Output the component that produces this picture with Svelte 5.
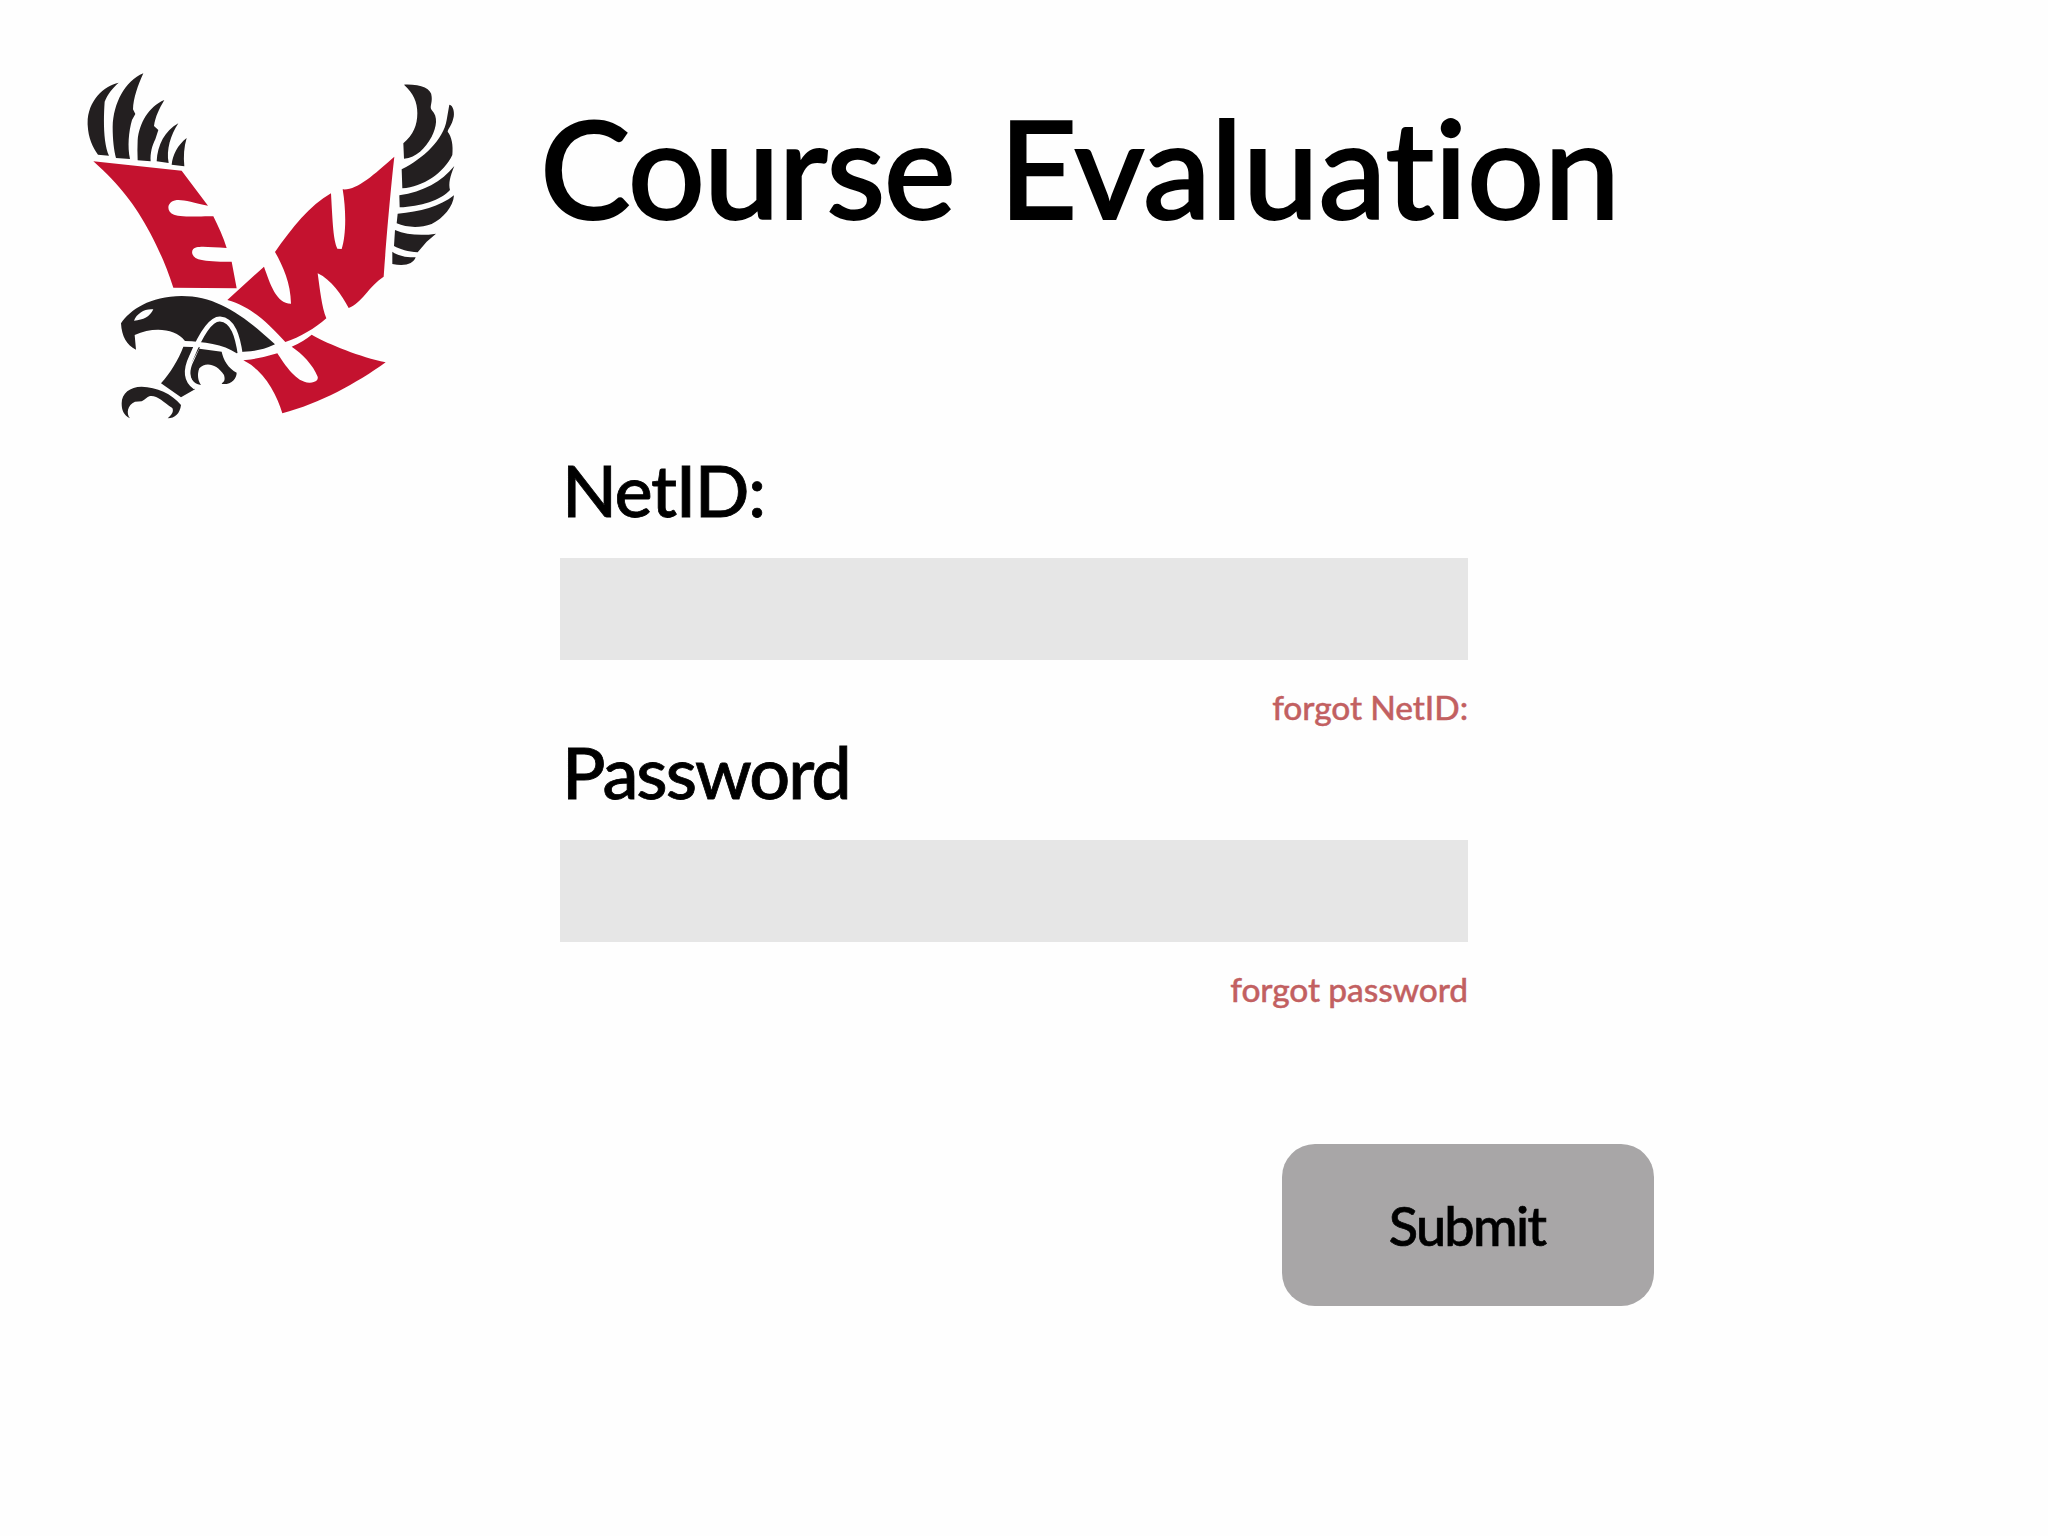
<script>
  let netId = $state('');
  let password = $state('');
</script>

<div class="page">
  <header>
    <svg class="logo" viewBox="80 66 384 360" role="img" aria-label="EWU eagle">
      <!-- left wing feathers and the E -->
      <g transform="translate(70 60) scale(.33333)">
        <g fill="#231f20">
          <path d="M146 68C100 78 50 125 53 195C55 235 68 262 84 284L117 287C100 250 100 180 104 125C112 104 128 84 146 68Z" />
          <path d="M220 40C165 62 130 130 128 200C128 240 132 270 138 294L180 297C172 260 176 215 186 180L196 162L189 148C190 115 204 75 220 40Z" />
          <path d="M283 120C235 140 208 190 203 240C202 260 202 280 203 301L242 304C240 280 247 255 256 238L265 210L252 198C256 170 268 145 283 120Z" />
          <path d="M325 190C285 212 262 255 260 304L296 309C288 270 302 225 325 190Z" />
          <path d="M350 234C322 256 308 285 305 314L343 319C340 290 342 260 350 234Z" />
        </g>
        <path fill="#c4122f" d="M70 304L335 332L414 437C370 428 340 418 320 420C290 424 287 455 312 464C330 470 370 470 430 469C445 500 460 530 470 564C430 562 395 558 380 562C360 566 362 590 385 598C405 604 440 606 485 605L500 685L310 683C290 620 265 565 240 518C195 435 150 375 70 304Z" />
      </g>
      <!-- right wing feathers -->
      <g transform="translate(260 60) scale(.33333)" fill="#231f20">
        <path d="M432 74C480 72 515 85 515 110C517 130 508 140 515 150C535 170 530 200 515 230C495 265 470 292 432 296L430 250C460 225 472 195 472 160C472 125 460 100 432 74Z" />
        <path d="M425 328C490 295 550 240 560 180L568 134C580 135 585 160 580 175C576 195 565 205 563 215C575 230 580 255 577 285C550 340 490 380 427 385Z" />
        <path d="M418 406C490 395 545 365 583 318C570 350 565 370 570 390C545 420 480 440 419 442Z" />
        <path d="M413 461C480 455 540 440 582 406C580 440 550 475 515 492C480 505 440 503 410 490Z" />
        <path d="M405 510C440 525 485 528 528 521L500 545L473 577C445 575 420 568 402 558Z" />
        <path d="M397 575C415 588 440 593 467 592C460 612 435 620 397 612Z" />
      </g>
      <!-- W and U -->
      <g transform="translate(220 220) scale(.33333)" fill="#c4122f">
        <path d="M22 240L132 140C150 190 168 250 213 251C212 190 190 140 165 96C215 25 270 -45 333 -80C338 10 340 60 352 86L365 87C377 50 380 -20 368 -92C410 -88 460 -135 523 -190C515 -120 500 40 491 170C445 200 425 250 386 264C365 225 335 180 293 160C300 210 305 260 319 295C285 325 240 352 196 366C150 315 95 260 22 240Z" />
        <path d="M70 421Q125 415 172 400C195 435 230 490 270 488C290 487 295 478 293 470C280 435 245 400 215 380Q250 365 275 344C330 375 420 410 497 427C410 490 300 550 187 580C170 520 130 450 70 421Z" />
      </g>
      <!-- head and talons -->
      <g transform="translate(100 180) scale(.33333)">
        <g fill="#231f20">
          <path d="M63 430C65 470 80 495 108 509L104 465C160 440 225 445 255 483C310 485 370 492 410 520L430 515Q480 515 525 493C430 405 350 348 245 348C150 348 90 390 63 430Z" />
          <path d="M250 500L300 502L268 560C256 590 264 612 285 628L243 652L183 610C210 580 235 540 250 500Z" />
          <path d="M298 506L365 515C370 540 385 565 410 578C410 595 395 615 365 612C368 605 378 605 372 585C350 550 315 545 298 565C290 585 295 605 303 615C270 610 265 580 278 550Z" />
          <path d="M65 670C65 640 90 620 125 620C170 622 215 640 243 675C240 700 225 715 203 715C215 705 222 695 217 684C190 665 170 645 150 648C140 650 135 660 125 664L105 665C82 675 78 700 90 715C70 705 65 690 65 670Z" />
        </g>
        <path fill="#fefefe" d="M102 422C110 400 135 385 160 388C150 410 130 420 102 422Z" />
        <path fill="none" stroke="#fefefe" stroke-width="15" d="M286 622C255 600 258 565 275 530C300 470 330 416 360 417C400 420 413 470 421 524" />
      </g>
    </svg>
    <h1><span class="course">Course</span><span class="evaluation">Evaluation</span></h1>
  </header>

  <form onsubmit={(event) => event.preventDefault()}>
    <label class="label netid" for="netid">NetID:</label>
    <input id="netid" type="text" bind:value={netId} />
    <a href="#netid">forgot NetID:</a>
    <label class="label" for="password">Password</label>
    <input id="password" type="password" bind:value={password} />
    <a href="#password">forgot password</a>
    <button type="submit">Submit</button>
  </form>
</div>

<style>
  :global(body) {
    background: #fefefe;
  }
  .page {
    box-sizing: border-box;
    width: 2048px;
    height: 1536px;
    overflow: hidden;
    padding: 66px 0 0 80px;
    font-family: Lato, "Open Sans", sans-serif;
    font-weight: 500;
    font-variant-ligatures: none;
    color: #000;
  }
  header {
    display: flex;
    height: 374px;
  }
  .logo {
    width: 384px;
    height: 360px;
    filter: blur(0.6px);
  }
  h1 {
    display: flex;
    margin: 0 0 0 76px;
    padding-top: 11px;
    font-size: 136px;
    line-height: 180px;
    font-weight: 500;
    white-space: nowrap;
    -webkit-text-stroke: 1.8px #000;
  }
  .course {
    width: 459px;
    letter-spacing: -1.5px;
  }
  .evaluation {
    letter-spacing: -0.3px;
  }
  form {
    display: flex;
    flex-direction: column;
    width: 908px;
    margin-left: 480px;
  }
  .label {
    height: 118px;
    padding-left: 2px;
    font-size: 72px;
    line-height: 98px;
    letter-spacing: -2px;
    -webkit-text-stroke: 0.8px #000;
  }
  .netid {
    letter-spacing: -1.4px;
  }
  input {
    box-sizing: border-box;
    width: 908px;
    height: 102px;
    border: 0;
    padding: 0 24px;
    background: #e6e6e6;
    font: 500 48px Lato, sans-serif;
    outline: none;
  }
  a {
    height: 62px;
    line-height: 95px;
    font-size: 33.5px;
    letter-spacing: -0.1px;
    text-align: right;
    text-decoration: none;
    color: #c26061;
    -webkit-text-stroke: 0.4px #c26061;
  }
  button {
    width: 372px;
    height: 162px;
    margin: 140px 0 0 722px;
    border: 0;
    border-radius: 33px;
    padding: 0 2px 0 0;
    background: #a8a6a7;
    color: #000;
    font: 500 54px Lato, sans-serif;
    letter-spacing: -1.7px;
    -webkit-text-stroke: 0.7px #000;
  }
</style>
